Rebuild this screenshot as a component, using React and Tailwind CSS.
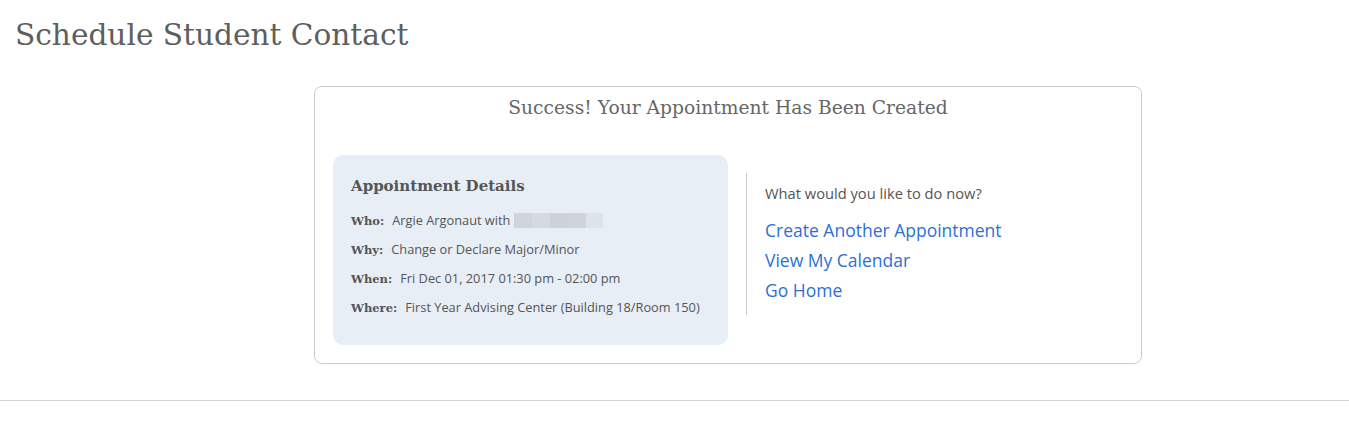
import React from 'react';

const slab = { fontFamily: '"DejaVu Serif", "Liberation Serif", serif' };

const details = [
  { label: 'Who:', value: 'Argie Argonaut with', blur: true },
  { label: 'Why:', value: 'Change or Declare Major/Minor' },
  { label: 'When:', value: 'Fri Dec 01, 2017 01:30 pm - 02:00 pm' },
  { label: 'Where:', value: 'First Year Advising Center (Building 18/Room 150)' },
];

const Blurred = () => (
  <span className="ml-[4px] inline-flex h-[15px] self-center">
    <span className="w-[18px] bg-[#d0d5dc]" />
    <span className="w-[18px] bg-[#d5dae0]" />
    <span className="w-[18px] bg-[#cdd2d9]" />
    <span className="w-[18px] bg-[#cfd4db]" />
    <span className="w-[17px] bg-[#dde3ea]" />
  </span>
);

export default function App() {
  return (
    <div className="min-h-[426px] bg-white text-[#555]" style={{ fontFamily: '"Open Sans", sans-serif' }}>
      <h1 className="px-[15px] pt-[16px] text-[29.6px] leading-[38px] font-light text-[#5e5e5e]" style={slab}>
        Schedule Student Contact
      </h1>

      {/* Success card */}
      <div className="ml-[314px] mt-[32px] w-[828px] h-[278px] rounded-[8px] border border-[#ccc] px-[18px]">
        <h2 className="pt-[8px] text-center text-[18.7px] leading-[26px] font-light text-[#666]" style={slab}>
          Success! Your Appointment Has Been Created
        </h2>

        <div className="mt-[34px] flex items-start">
          <div className="w-[395px] h-[190px] rounded-[10px] bg-[#e8eef6] px-[18px] pt-[19px]">
            <h3 className="text-[15px] leading-[24px] font-bold text-[#555]" style={slab}>
              Appointment Details
            </h3>
            <div className="mt-[12px] flex flex-col gap-[8px]">
              {details.map((d) => (
                <div key={d.label} className="flex items-baseline text-[12.8px] leading-[20px] whitespace-nowrap">
                  <span className="mr-[8px] text-[11.5px] font-bold text-[#555]" style={slab}>{d.label}</span>
                  <span className="text-[#555]">{d.value}</span>
                  {d.blur && <Blurred />}
                </div>
              ))}
            </div>
          </div>

          <div className="ml-[18px] mt-[18px] h-[142px] border-l border-[#ccc] pl-[18px] pt-[9px]">
            <p className="text-[14.7px] leading-[22px] text-[#555]">What would you like to do now?</p>
            <div className="mt-[11px] flex flex-col text-[17.5px] leading-[30px] text-[#2e6fd6]">
              <a href="#" className="hover:underline">Create Another Appointment</a>
              <a href="#" className="hover:underline">View My Calendar</a>
              <a href="#" className="hover:underline">Go Home</a>
            </div>
          </div>
        </div>
      </div>

      <hr className="mt-[36px] border-t border-[#d4d4d4]" />
    </div>
  );
}
